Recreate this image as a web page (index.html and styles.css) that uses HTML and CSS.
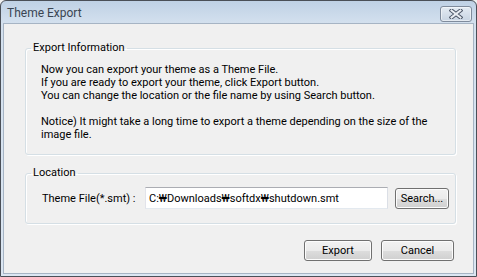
FILE: index.html
```html
<!DOCTYPE html>
<html>
<head>
<meta charset="utf-8">
<link rel="stylesheet" href="styles.css">
</head>
<body>
<div class="window">
  <div class="titlebar">
    <span class="title">Theme Export</span>
    <button class="close" aria-label="Close">
      <svg width="14" height="10" viewBox="0 0 14 10">
        <path d="M2.5 1.5 L11.5 8.5 M11.5 1.5 L2.5 8.5" stroke="#4b5566" stroke-width="4" stroke-linecap="square" fill="none"/>
        <path d="M2.5 1.5 L11.5 8.5 M11.5 1.5 L2.5 8.5" stroke="#e9edf2" stroke-width="2" stroke-linecap="square" fill="none"/>
      </svg>
    </button>
  </div>
  <div class="client">
    <fieldset class="group info">
      <legend>Export Information</legend>
      <p>Now you can export your theme as a Theme File.<br>If you are ready to export your theme, click Export button.<br>You can change the location or the file name by using Search button.</p>
      <p>Notice) It might take a long time to export a theme depending on the size of the<br>image file.</p>
    </fieldset>
    <fieldset class="group location">
      <legend>Location</legend>
      <div class="row">
        <label class="field-label">Theme File(*.smt) :</label>
        <input class="path" type="text" value="C:₩Downloads₩softdx₩shutdown.smt">
        <button class="btn search">Search...</button>
      </div>
    </fieldset>
    <div class="actions">
      <button class="btn export">Export</button>
      <button class="btn cancel">Cancel</button>
    </div>
  </div>
</div>
</body>
</html>
```

FILE: styles.css
```css
* { box-sizing: border-box; }
html, body { margin: 0; padding: 0; background: #f0f0f0; }
body { font-family: Roboto, "Noto Sans", sans-serif; font-size: 11px; color: #000; }

.window {
  width: 477px;
  height: 277px;
  border: 1px solid #4a4f57;
  border-radius: 6px 6px 0 0;
  background: linear-gradient(#bfd1e5, #d3e0ee 22px, #dbe6f2);
  padding: 0 2px 2px 2px;
  display: flex;
  flex-direction: column;
  overflow: hidden;
}

.titlebar {
  height: 22px;
  flex: none;
  display: flex;
  align-items: center;
  justify-content: space-between;
  padding: 0 2px 0 4px;
}
.title {
  color: #3a4552;
  font-size: 12px;
  margin-top: 1px;
}
.close {
  width: 32px;
  height: 16px;
  margin-top: 3px;
  border: 1px solid #7f8b9c;
  border-radius: 3px;
  background: linear-gradient(#e4ebf3, #c8d4e2);
  box-shadow: inset 0 0 0 1px rgba(255,255,255,0.5);
  display: flex;
  align-items: center;
  justify-content: center;
  padding: 0;
}

.client {
  flex: 1;
  background: #f0f0f0;
  border: 1px solid #a6b4c4;
  padding: 17px 0 0 21px;
  display: flex;
  flex-direction: column;
}

.group {
  margin: 0;
  width: 431px;
  border: 1px solid #d5dfe5;
  border-radius: 3px;
  box-shadow: 1px 1px 0 #fff, inset 1px 1px 0 #fff;
  padding: 0 0 0 15px;
}
.group legend {
  padding: 0 2px;
  margin-left: -10px;
  line-height: 14px;
  font-size: 11px;
  color: #000;
}
.info { height: 114px; }
.info p {
  margin: 8px 0 0 0;
  line-height: 13px;
}
.info p + p { margin-top: 13px; }

.location {
  margin-top: 11px;
  height: 58px;
  padding-top: 7px;
}
.row {
  display: flex;
  align-items: center;
}
.field-label { width: 104px; padding-left: 1px; }
.path {
  width: 243px;
  height: 22px;
  border: 1px solid #abadb3;
  border-color: #abadb3 #dbdfe6 #e3e9ef #e2e3ea;
  background: #fff;
  font: inherit;
  padding: 0 3px;
  color: #000;
}

.btn {
  font: inherit;
  color: #000;
  border: 1px solid #707070;
  border-radius: 3px;
  background: linear-gradient(#f2f2f2 0%, #ebebeb 50%, #dddddd 51%, #cfcfcf 100%);
  box-shadow: inset 0 0 0 1px #fcfcfc;
  height: 21px;
  padding: 0;
}
.search { width: 54px; margin-left: 7px; }

.actions {
  display: flex;
  justify-content: flex-end;
  gap: 9px;
  margin-top: 16px;
  padding-right: 19px;
}
.export { width: 68px; }
.cancel { width: 73px; }
```
